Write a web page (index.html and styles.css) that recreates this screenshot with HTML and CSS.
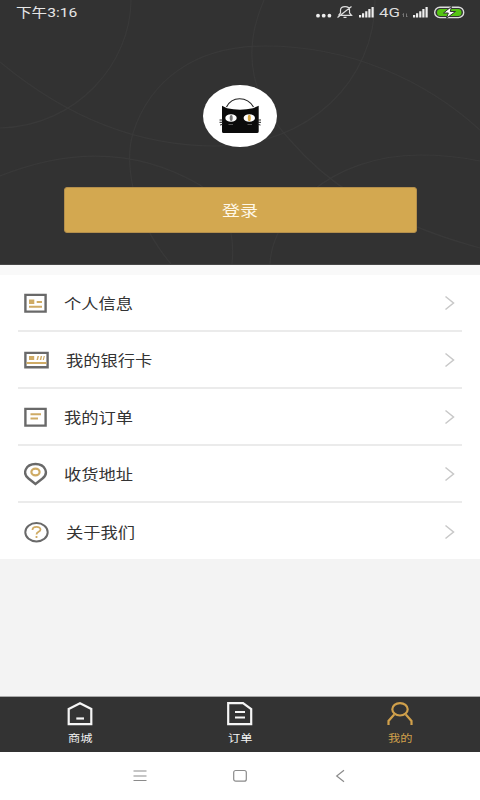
FILE: index.html
```html
<!DOCTYPE html>
<html lang="zh-CN">
<head>
<meta charset="utf-8">
<meta name="viewport" content="width=device-width, initial-scale=1">
<title>我的</title>
<link rel="stylesheet" href="styles.css">
</head>
<body>
<div class="app">
  <header class="hero">
    <svg class="hero-lines" viewBox="0 0 480 265" aria-hidden="true">
      <path d="M131 0C131 62 78 126 0 128M0 62C60 112 130 146 215 146C310 146 375 80 375 0M264 0C240 55 253 100 290 140C320 175 370 218 480 248M171 264C130 215 125 160 133 133C150 80 195 46 265 46C350 46 425 80 480 130M0 176C60 152 130 144 200 185C228 205 235 235 232 264M270 264C272 215 330 155 420 155Q450 155 480 161"/>
    </svg>
    <div class="status">
      <span class="wide time">下午3:16</span>
      <div class="status-icons">
        <svg width="150" height="24" viewBox="0 0 150 24" aria-hidden="true">
          <g fill="#eee"><circle cx="3" cy="15.7" r="1.9"/><circle cx="8.7" cy="15.7" r="1.9"/><circle cx="14.4" cy="15.7" r="1.9"/></g>
          <g fill="none" stroke="#ddd" stroke-width="1.2"><path d="M23.5 15.3H36.5L34.5 13V10C34.5 5.500 25.700 5.500 25.500 10V13L23.500 15.300M28.500 17.400H31.500M36.500 6.500L22.500 17.500"/></g>
          <g id="signal" fill="#eee"><path d="M44 15h2.200v2.500H44zM47 13.200h2.200v4.300H47zM50.200 11.300h2.200v6.200h-2.200zM53.300 9h2.200v8.500h-2.200zM56.500 7h2.200v10.500h-2.200z"/></g>
          <use href="#signal" x="54"/>
          <path d="M88.500 17V13.500M87.500 14.500L88.500 13.500M91.500 13.500V17L92.500 16" stroke="#888" stroke-width=".8" fill="none"/>
          <rect x="119.700" y="7.200" width="29" height="10.400" rx="5.200" fill="#333" stroke="#ddd" stroke-width="1.400"/>
          <rect x="122" y="8.900" width="24.500" height="7" rx="3.500" fill="#55c413"/>
          <path d="M136.500 6.500L128.500 13H133.300L131.500 18.200L140.500 11.500H135.300Z" fill="#fff" stroke="#333" stroke-width="1"/>
        </svg>
        <span class="network">4G</span>
      </div>
    </div>
    <div class="avatar">
      <svg width="74" height="62" viewBox="0 0 74 62" aria-hidden="true">
        <path d="M23.500 22C29 11 44 11 50.500 22" fill="none" stroke="#222" stroke-width="1.200"/>
        <path d="M19 20.800L24 23.300Q37 26 50 23.300L55.700 20.800V46.500Q55.700 48 54 48H20.500Q19 48 19 46.500Z" fill="#0b0b0b"/>
        <path d="M16.500 35H20M16.500 37.300H20M17 40L20 39.300M54.500 35H58M54.500 37.300H58M54.500 39.300L57.500 40" stroke="#222" stroke-width="1"/>
        <ellipse cx="28" cy="33" rx="5.700" ry="3.800" fill="#fff"/><ellipse cx="46.300" cy="33" rx="5.700" ry="3.800" fill="#fff"/>
        <ellipse cx="28.200" cy="33" rx="1.500" ry="3" fill="#777"/><ellipse cx="46.300" cy="33" rx="1.500" ry="3.200" fill="#d9a840"/>
        <path d="M25.500 39.500H30M44.500 39.500H49" stroke="#555" stroke-width="1"/>
      </svg>
    </div>
    <button class="login"><span class="wide-center">登录</span></button>
  </header>
  <main class="menu">
    <a class="row">
      <svg class="icon" viewBox="0 0 26 24"><path d="M1.400 3.900H21.600V20.600H1.400Z" class="line"/><path d="M5 8.500h5.300v4.500H5zM12.700 10h5.300v2h-5.300zM5 14.800h13v2H5z" class="gold"/></svg>
      <span class="wide">个人信息</span>
      <svg class="chevron" viewBox="0 0 12 16"><path d="M1.500 1.500L9.500 8L1.500 14.500"/></svg>
    </a>
    <a class="row">
      <svg class="icon" viewBox="0 0 26 24"><path d="M1.400 4.900H23.600V19.200H1.400Z" class="line"/><path d="M5 8h5.200v4H5zM2.500 14h20v2h-20zM12.500 12l1-4h1.500l-1 4zM15.700 12l1-4h1.500l-1 4zM18.700 12l1-4h1.200l-1 4z" class="gold"/></svg>
      <span class="wide shifted">我的银行卡</span>
      <svg class="chevron" viewBox="0 0 12 16"><path d="M1.500 1.500L9.500 8L1.500 14.500"/></svg>
    </a>
    <a class="row">
      <svg class="icon" viewBox="0 0 26 24"><path d="M1.400 3.900H21.600V20.600H1.400Z" class="line"/><path d="M6.500 8.200h10.500v2H6.500zM6.500 12.500h7.500v2H6.500z" class="gold"/></svg>
      <span class="wide">我的订单</span>
      <svg class="chevron" viewBox="0 0 12 16"><path d="M1.500 1.500L9.500 8L1.500 14.500"/></svg>
    </a>
    <a class="row">
      <svg class="icon" viewBox="0 0 26 24"><path d="M11.500 22L4.500 16.500C-2 11.500 1.500 2 11.500 2S25 11.500 18.500 16.500Z" class="line"/><ellipse cx="11.500" cy="10" rx="4.100" ry="3.300" class="gold-line"/></svg>
      <span class="wide">收货地址</span>
      <svg class="chevron" viewBox="0 0 12 16"><path d="M1.500 1.500L9.500 8L1.500 14.500"/></svg>
    </a>
    <a class="row">
      <svg class="icon" viewBox="0 0 26 24"><ellipse cx="12.500" cy="12.200" rx="11.200" ry="9.200" class="line thin"/><path d="M8.500 10C8.500 6 16.500 6 16.500 9.500C16.500 12 12.500 11.700 12.500 14.500M12.500 16V18" class="gold-line question"/></svg>
      <span class="wide shifted">关于我们</span>
      <svg class="chevron" viewBox="0 0 12 16"><path d="M1.500 1.500L9.500 8L1.500 14.500"/></svg>
    </a>
  </main>
  <nav class="tabs">
    <a class="tab"><svg viewBox="0 0 26 24"><path d="M1.700 7L13 1.300L24.300 7V22.200H1.700Z"/><path d="M9.300 16.500H17"/></svg><span class="wide-center">商城</span></a>
    <a class="tab"><svg viewBox="0 0 26 24"><path d="M1.200 1.200H16L24.200 7V22.200H1.200Z"/><path d="M8 10H18M8 15.500H18"/></svg><span class="wide-center">订单</span></a>
    <a class="tab active"><svg viewBox="0 0 26 24"><ellipse cx="13" cy="7.300" rx="7.700" ry="6.200"/><path d="M1.500 23V19L7.200 12.500M18.800 12.500L24.500 19V23"/></svg><span class="wide-center">我的</span></a>
  </nav>
  <footer class="system">
    <svg viewBox="0 0 14 14"><path d="M.5 2H13.500M.5 7H13.500M.5 11.500H13.500"/></svg>
    <svg viewBox="0 0 14 14"><rect x=".7" y="1.500" width="12.600" height="10.700" rx="2"/></svg>
    <svg viewBox="0 0 14 14"><path d="M11 1.200L3.700 7L11 12.800"/></svg>
  </footer>
</div>
</body>
</html>
```
FILE: styles.css
```css
* { box-sizing: border-box; }
body {
  margin: 0;
  font-family: "Noto Sans", "Noto Sans CJK SC", sans-serif;
}
.app {
  width: 480px;
  height: 800px;
  display: flex;
  flex-direction: column;
  overflow: hidden;
  background: #f3f3f3;
}
.hero {
  position: relative;
  height: 265px;
  flex: none;
  display: flex;
  flex-direction: column;
  align-items: center;
  background: #323232;
  border-bottom: 1px solid #484848;
}
.hero-lines { position: absolute; inset: 0; width: 480px; height: 265px; }
.hero-lines path { fill: none; stroke: #393939; stroke-width: 1.2; }
.status {
  position: relative;
  width: 100%;
  height: 85px;
  padding: 0 15px 0 16px;
  display: flex;
  justify-content: space-between;
}
.wide {
  display: inline-block;
  transform: scaleX(1.2);
  transform-origin: left center;
  white-space: nowrap;
}
.wide-center { display: inline-block; transform: scaleX(1.2); }
.time {
  font: 13px/26px Roboto, "Noto Sans CJK SC", sans-serif;
  color: #e6e6e6;
}
.status-icons { position: relative; width: 150px; height: 24px; }
.network {
  position: absolute;
  left: 64px;
  top: 5px;
  font: 13px/16px Roboto, sans-serif;
  color: #ddd;
  transform: scaleX(1.3);
  transform-origin: left;
}
.avatar {
  position: relative;
  width: 74px;
  height: 62px;
  background: #fff;
  border-radius: 50%;
}
.login {
  position: relative;
  width: 353px;
  height: 46px;
  margin-top: 40px;
  padding: 0;
  border: 1px solid #b48f4c;
  border-radius: 3px;
  background: #d3a850;
  color: #fff8e8;
  font: 15px/44px "Noto Sans CJK SC", sans-serif;
}
.menu {
  flex: none;
  height: 294px;
  padding: 0 18px;
  background: #fff;
  border-top: 10px solid #f9f9f9;
}
.row {
  display: flex;
  align-items: center;
  height: 57px;
  padding: 0 6px;
  border-bottom: 2px solid #ebebeb;
  color: #333;
  font: 14.4px/20px "Noto Sans CJK SC", sans-serif;
}
.row:last-child { border-bottom: 0; }
.icon { width: 26px; height: 24px; margin-right: 14px; flex: none; }
.shifted { margin-left: 2px; }
.line { fill: none; stroke: #696969; stroke-width: 2.4; }
.thin { stroke-width: 2; }
.gold { fill: #cfab65; }
.gold-line { fill: none; stroke: #cfab65; stroke-width: 2.2; }
.question { stroke-width: 1.8; }
.chevron { width: 12px; height: 16px; margin-left: auto; }
.chevron path { fill: none; stroke: #c8c8c8; stroke-width: 1.5; }
.tabs {
  display: grid;
  grid-template-columns: repeat(3, 1fr);
  height: 56px;
  margin-top: auto;
  background: #333;
  border-top: 1px solid #aaa;
}
.tab {
  display: flex;
  flex-direction: column;
  align-items: center;
  padding-top: 5px;
  color: #f5f5f5;
  font: 10.2px/16px "Noto Sans CJK SC", sans-serif;
}
.tab svg {
  width: 26px;
  height: 24px;
  margin-bottom: 4px;
  fill: none;
  stroke: currentColor;
  stroke-width: 2.2;
}
.active { color: #d0a04b; }
.system {
  height: 48px;
  padding: 0 133px;
  display: flex;
  align-items: center;
  justify-content: space-between;
  background: #fff;
}
.system svg { width: 14px; height: 14px; fill: none; stroke: #8b8b8b; stroke-width: 1.2; }
```
